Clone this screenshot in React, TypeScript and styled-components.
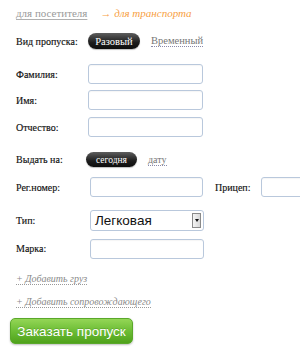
import React from "react";
import styled, { createGlobalStyle, css } from "styled-components";

const serif = css`
  font-family: "Liberation Serif", "Times New Roman", serif;
`;

const Global = createGlobalStyle`
  html, body { margin: 0; padding: 0; background: #fff; overflow: hidden; }
  body { width: 300px; height: 352px; }
`;

const Page = styled.div`
  ${serif};
  padding: 6px 0 0 16px;
  font-size: 11px;
  color: #1a1a1a;
  width: 400px;
`;

const TopNav = styled.div`
  display: flex;
  gap: 13px;
  height: 14px;
  line-height: 14px;
`;

const NavLink = styled.span<{ $active?: boolean }>`
  ${serif};
  font-size: 11px;
  color: ${(p) => (p.$active ? "#f7a043" : "#9a9a9a")};
  font-style: ${(p) => (p.$active ? "italic" : "normal")};
  text-decoration: ${(p) => (p.$active ? "none" : "underline")};
  text-decoration-color: #b0b0b0;
  text-underline-offset: 2px;
`;

const Row = styled.div<{ $mt: number; $h: number; $label?: number }>`
  display: grid;
  grid-template-columns: ${(p) => p.$label ?? 72}px auto auto 1fr;
  align-items: center;
  margin-top: ${(p) => p.$mt}px;
  height: ${(p) => p.$h}px;
`;

const Label = styled.span`
  ${serif};
  color: #111;
  font-size: 10px;
  white-space: nowrap;
  -webkit-text-stroke: 0.15px #111;
`;

const Toggle = styled.div`
  display: flex;
  align-items: center;
  gap: 11px;
`;

const Pill = styled.span<{ $small?: boolean }>`
  ${serif};
  display: inline-flex;
  align-items: center;
  justify-content: center;
  height: ${(p) => (p.$small ? 15 : 16)}px;
  width: ${(p) => (p.$small ? 51 : 52)}px;
  border-radius: 8px;
  background: linear-gradient(#5e5e5e, #1c1c1c 60%, #0d0d0d);
  color: #fff;
  font-size: ${(p) => (p.$small ? 9.5 : 10.5)}px;
  box-shadow: 0 1px 1px rgba(0, 0, 0, 0.25);
`;

const DottedLink = styled.span<{ $small?: boolean }>`
  ${serif};
  color: #777;
  font-size: ${(p) => (p.$small ? 10 : 10.5)}px;
  border-bottom: 1px dotted #8a8aa8;
  line-height: 11px;
`;

const Input = styled.div<{ $w?: number }>`
  box-sizing: border-box;
  width: ${(p) => p.$w ?? 115}px;
  height: 20px;
  border: 1px solid #b9c8dc;
  border-radius: 3px;
  background: #fff;
  box-shadow: inset 0 1px 1px rgba(0, 0, 0, 0.04);
`;

const SideLabel = styled(Label)`
  margin-left: 12px;
  width: 46px;
`;

const SelectBox = styled.div`
  box-sizing: border-box;
  width: 114px;
  height: 21px;
  border: 1px solid #b9c8dc;
  border-radius: 3px;
  display: flex;
  align-items: center;
  justify-content: space-between;
  padding: 0 2px 0 4px;
  font-family: "Liberation Sans", Arial, sans-serif;
  font-size: 13.5px;
  color: #111;
`;

const SelectArrow = styled.span`
  box-sizing: border-box;
  width: 9px;
  height: 15px;
  border: 1px solid #8a8a8a;
  background: linear-gradient(90deg, #f4f4f4, #d8d8d8);
  display: flex;
  align-items: center;
  justify-content: center;
  &::after {
    content: "";
    border-left: 2px solid transparent;
    border-right: 2px solid transparent;
    border-top: 3px solid #111;
  }
`;

const AddLink = styled.div<{ $mt: number }>`
  ${serif};
  margin-top: ${(p) => p.$mt}px;
  height: 14px;
  line-height: 14px;
  font-style: italic;
  color: #8a8a8a;
  font-size: 10px;
  & > span {
    border-bottom: 1px dotted #9a9a9a;
  }
`;

const Submit = styled.button`
  display: block;
  margin: 9px 0 0 -6px;
  width: 123px;
  height: 26px;
  border: 1px solid #5aa82a;
  border-radius: 5px;
  background: linear-gradient(#94d656, #6cbd35 50%, #4fa21b);
  box-shadow: 0 1px 2px rgba(0, 0, 0, 0.25);
  color: #fff;
  font-family: "Liberation Sans", Arial, sans-serif;
  font-size: 13.5px;
  padding: 0;
  text-shadow: 0 -1px 0 rgba(0, 0, 0, 0.15);
`;

export default function App() {
  return (
    <>
      <Global />
      <Page>
        <TopNav>
          <NavLink>для посетителя</NavLink>
          <NavLink $active>→ для транспорта</NavLink>
        </TopNav>

        <Row $mt={13} $h={16}>
          <Label>Вид пропуска:</Label>
          <Toggle>
            <Pill>Разовый</Pill>
            <DottedLink>Временный</DottedLink>
          </Toggle>
        </Row>

        <Row $mt={15} $h={20}>
          <Label>Фамилия:</Label>
          <Input />
        </Row>
        <Row $mt={6} $h={20}>
          <Label>Имя:</Label>
          <Input />
        </Row>
        <Row $mt={7} $h={20}>
          <Label>Отчество:</Label>
          <Input />
        </Row>

        <Row $mt={15} $h={15} $label={70}>
          <Label>Выдать на:</Label>
          <Toggle>
            <Pill $small>сегодня</Pill>
            <DottedLink $small>дату</DottedLink>
          </Toggle>
        </Row>

        <Row $mt={10} $h={20} $label={74}>
          <Label>Рег.номер:</Label>
          <Input $w={113} />
          <SideLabel>Прицеп:</SideLabel>
          <Input $w={114} />
        </Row>
        <Row $mt={13} $h={21} $label={74}>
          <Label>Тип:</Label>
          <SelectBox>
            Легковая
            <SelectArrow />
          </SelectBox>
        </Row>
        <Row $mt={7} $h={21} $label={74}>
          <Label>Марка:</Label>
          <Input $w={114} />
        </Row>

        <AddLink $mt={13}>
          <span>+ Добавить груз</span>
        </AddLink>
        <AddLink $mt={9}>
          <span>+ Добавить сопровождающего</span>
        </AddLink>

        <Submit>Заказать пропуск</Submit>
      </Page>
    </>
  );
}
